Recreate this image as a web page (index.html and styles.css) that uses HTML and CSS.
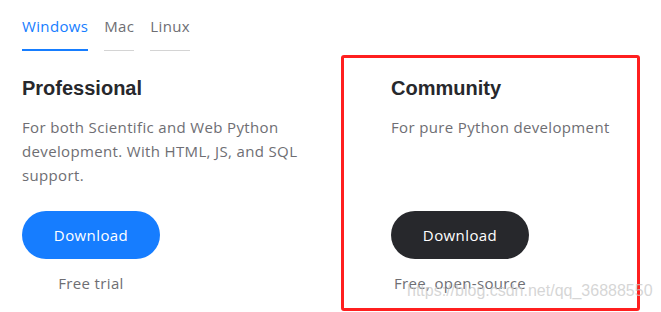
FILE: index.html
```html
<!DOCTYPE html>
<html>
<head>
    <title>Download PyCharm</title>
    <link rel="stylesheet" href="styles.css">
</head>
<body>
    <div class="page">
        <div class="tabs">
            <span class="tab active">Windows</span>
            <span class="tab">Mac</span>
            <span class="tab">Linux</span>
        </div>

        <div class="editions">
            <div class="edition">
                <h3>Professional</h3>
                <p class="desc">For both Scientific and Web Python development. With HTML, JS, and SQL support.</p>
                <div class="action">
                    <button class="btn btn-blue">Download</button>
                    <div class="note">Free trial</div>
                </div>
            </div>
            <div class="edition marked">
                <h3>Community</h3>
                <p class="desc">For pure Python development</p>
                <div class="action">
                    <button class="btn btn-dark">Download</button>
                    <div class="note">Free, open-source</div>
                </div>
            </div>
        </div>

        <div class="watermark">https://blog.csdn.net/qq_36888550</div>
    </div>
</body>
</html>
```

FILE: styles.css
```css
body {
    margin: 0;
    font-family: "Open Sans", Lato, sans-serif;
    letter-spacing: 0.35px;
    background: #fff;
}
.page {
    position: relative;
    width: 661px;
    height: 312px;
    padding-left: 22px;
    box-sizing: border-box;
    overflow: hidden;
}
.tabs {
    display: flex;
    align-items: flex-end;
    gap: 16px;
    padding-top: 16px;
    height: 35px;
}
.tab {
    font-size: 15px;
    line-height: 20px;
    color: #6e6e73;
    padding-bottom: 14px;
    border-bottom: 1px solid #d4d4d4;
}
.tab.active {
    color: #167dff;
    padding-bottom: 13px;
    border-bottom: 2px solid #167dff;
}
.editions {
    display: flex;
    margin-top: 4px;
}
.edition {
    width: 319px;
    box-sizing: border-box;
    padding-top: 21px;
}
.edition.marked {
    width: 299px;
    height: 256px;
    padding: 18px 0 0 47px;
    border: 3px solid #ff1f1f;
    border-radius: 3px;
}
h3 {
    margin: 0;
    font-family: "Liberation Sans", Arial, sans-serif;
    font-size: 20px;
    line-height: 24px;
    font-weight: bold;
    letter-spacing: 0;
    color: #27282c;
}
.desc {
    margin: 15px 0 24px;
    width: 290px;
    min-height: 72px;
    font-size: 15px;
    line-height: 24px;
    color: #6e6e73;
}
.action {
    width: 138px;
    text-align: center;
}
.btn {
    display: block;
    width: 138px;
    height: 48px;
    border: none;
    border-radius: 24px;
    font-family: "Open Sans", Lato, sans-serif;
    font-size: 15px;
    letter-spacing: 0.4px;
    color: #fff;
    cursor: pointer;
}
.btn-blue {
    background-color: #167dff;
}
.btn-dark {
    background-color: #27282c;
}
.note {
    margin-top: 12px;
    font-size: 15px;
    line-height: 24px;
    color: #6e6e73;
    white-space: nowrap;
    margin-left: -20px;
    margin-right: -20px;
}
.watermark {
    position: absolute;
    left: 407px;
    top: 282px;
    font-family: "Liberation Sans", Arial, sans-serif;
    font-size: 16px;
    letter-spacing: 0;
    color: rgba(200, 200, 200, 0.75);
    white-space: nowrap;
}
```
